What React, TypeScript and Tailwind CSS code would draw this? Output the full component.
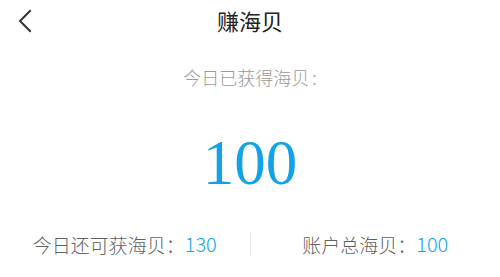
import React from "react";

export default function App() {
  const cjk = { fontFamily: '"Noto Sans CJK SC", "Noto Sans", sans-serif' };
  return (
    <div className="w-[500px] h-[277px] bg-white flex flex-col overflow-hidden" style={cjk}>
      <div className="relative h-[40px] flex items-center justify-center">
        <svg className="absolute left-[17px] top-[9px]" width="16" height="24" viewBox="0 0 16 24" fill="none">
          <path d="M13 2 L3 12 L13 22" stroke="#333" strokeWidth="2" strokeLinecap="square" strokeLinejoin="miter" />
        </svg>
        <span className="text-[22px] leading-none text-[#222] font-normal">赚海贝</span>
      </div>
      <div className="mt-[28px] text-center text-[18px] leading-none text-[#9a9a9a] font-light">
        今日已获得海贝<span className="ml-[3px]">:</span>
      </div>
      <div
        className="mt-[46px] text-center text-[63px] leading-none text-[#12a2e8]"
        style={{ fontFamily: '"Liberation Serif", serif' }}
      >
        100
      </div>
      <div className="mt-[36px] flex items-center h-[26px]">
        <div className="flex-1 flex justify-center items-center text-[19px] leading-none text-[#606060] font-light">
          <span>今日还可获海贝：</span>
          <span className="text-[#12a2e8] text-[20px]">130</span>
        </div>
        <div className="w-px h-[24px] bg-[#e3e3e3]" />
        <div className="flex-1 flex justify-center items-center text-[19px] leading-none text-[#606060] font-light">
          <span>账户总海贝：</span>
          <span className="text-[#12a2e8] text-[20px]">100</span>
        </div>
      </div>
    </div>
  );
}
